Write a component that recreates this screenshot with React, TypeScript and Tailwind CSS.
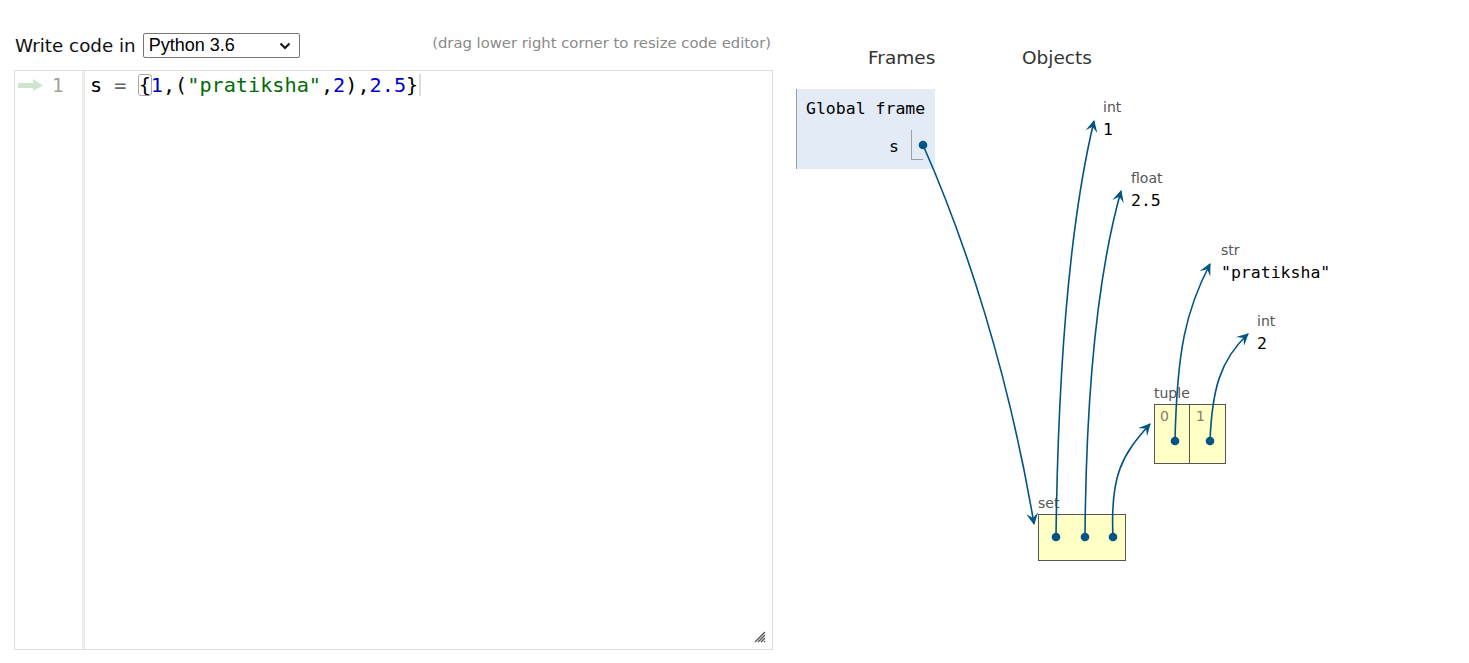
import React from "react";

const sans = { fontFamily: '"DejaVu Sans", Verdana, sans-serif' };
const mono = { fontFamily: '"DejaVu Sans Mono", "Liberation Mono", monospace' };

function Label({ x, y, text }: { x: number; y: number; text: string }) {
  return (
    <div
      className="absolute text-[14px] leading-[16px] text-[#555]"
      style={{ ...sans, left: x, top: y - 8 }}
    >
      {text}
    </div>
  );
}

function Value({ x, y, text }: { x: number; y: number; text: string }) {
  return (
    <div
      className="absolute text-[16.5px] leading-[20px] text-black whitespace-pre"
      style={{ ...mono, left: x, top: y - 9 }}
    >
      {text}
    </div>
  );
}

export default function App() {
  const arrows = [
    "M923,145 C965,240 1008,370 1034,524",
    "M1056,537 C1058,380 1068,230 1094,121",
    "M1085,537 C1086,400 1096,280 1121,191",
    "M1113,537 C1110,475 1122,455 1150,424",
    "M1175,441 C1177,350 1186,310 1210,264",
    "M1210,441 C1212,390 1220,360 1248,334",
  ];
  const dots: [number, number][] = [
    [923, 145],
    [1056, 537],
    [1085, 537],
    [1113, 537],
    [1175, 441],
    [1210, 441],
  ];
  return (
    <div className="relative w-[1469px] h-[663px] bg-white overflow-hidden">
      <div className="flex">
        <div className="pl-[14px] pt-[33px] w-[773px] shrink-0">
          <div className="flex items-center justify-between h-[25px]">
            <div className="flex items-center gap-[7px]">
              <span className="text-[18.3px] text-[#111] ml-[1px]" style={sans}>
                Write code in
              </span>
              <div
                className="flex items-center justify-between w-[157px] h-[25px] border border-[#767676] rounded-[2px] pl-[5px] pr-[8px] text-[18px] text-black"
                style={{ fontFamily: '"Liberation Sans", Arial, sans-serif' }}
              >
                <span>Python 3.6</span>
                <svg width="12" height="8" viewBox="0 0 12 8">
                  <path d="M1.5 1.5 L6 6 L10.5 1.5" fill="none" stroke="#111" strokeWidth="2" />
                </svg>
              </div>
            </div>
            <span className="text-[14.8px] text-[#8a8a8a] mr-[2px] -mt-[4px]" style={sans}>
              (drag lower right corner to resize code editor)
            </span>
          </div>
          <div className="relative mt-[12px] h-[580px] border border-[#dddddd] flex">
            <div className="w-[67px] h-full flex items-start pt-[3px]">
              <div className="flex items-center h-[22px]">
                <svg width="26" height="12" viewBox="0 0 26 12" className="ml-[3px]">
                  <rect x="0" y="4" width="17" height="5" fill="#cfe5cf" />
                  <path d="M15 0 L25 6.5 L15 12 Z" fill="#cfe5cf" />
                </svg>
                <span className="ml-[8px] text-[19px] text-[#a0a0a0]" style={mono}>
                  1
                </span>
              </div>
            </div>
            <div className="w-[3px] h-full bg-[#ebebeb]" />
            <div className="pl-[5px] pt-[3px]">
              <div className="flex items-center h-[22px] text-[20.2px] whitespace-pre" style={mono}>
                <span className="text-black">s </span>
                <span className="text-[#666]">=</span>
                <span> </span>
                <span className="border border-[#a8a8a8] rounded-[3px] -mx-[1px] leading-[20px]">{"{"}</span>
                <span className="text-[#0000cd]">1</span>
                <span>,(</span>
                <span className="text-[#036a07]">"pratiksha"</span>
                <span>,</span>
                <span className="text-[#0000cd]">2</span>
                <span>),</span>
                <span className="text-[#0000cd]">2.5</span>
                <span>{"}"}</span>
                <span className="w-[2px] h-[22px] bg-[#dcdcdc] ml-[1px]" />
              </div>
            </div>
            <svg width="12" height="12" viewBox="0 0 12 12" className="absolute right-[6px] bottom-[6px]">
              <path d="M11 1 L1 11 M11 4 L4 11 M11 7 L7 11 M11 10 L10 11" stroke="#555" strokeWidth="1.3" />
            </svg>
          </div>
        </div>
        <div className="flex-1" />
      </div>

      {/* Visualization canvas */}
      <div className="absolute inset-0 pointer-events-none">
        <div className="absolute left-[868px] top-[47px] text-[18.5px] leading-[22px] text-[#333]" style={sans}>
          Frames
        </div>
        <div className="absolute left-[1022px] top-[47px] text-[18.5px] leading-[22px] text-[#333]" style={sans}>
          Objects
        </div>

        <div className="absolute left-[796px] top-[89px] w-[139px] h-[80px] bg-[#e2ebf6] border-l border-[#a0a0a0]">
          <div className="absolute left-[9px] top-[10px] text-[16.5px] leading-[20px] text-black" style={mono}>
            Global frame
          </div>
          <div className="absolute left-[92px] top-[48px] text-[16.5px] leading-[20px] text-black" style={mono}>
            s
          </div>
          <div className="absolute left-[114px] top-[41px] w-[12px] h-[30px] border-l border-b border-[#a0a0a0]" />
        </div>

        <Label x={1103} y={107} text="int" />
        <Value x={1103} y={129} text="1" />
        <Label x={1131} y={178} text="float" />
        <Value x={1131} y={200} text="2.5" />
        <Label x={1221} y={250} text="str" />
        <Value x={1221} y={272} text={'"pratiksha"'} />
        <Label x={1257} y={321} text="int" />
        <Value x={1257} y={343} text="2" />

        <Label x={1154} y={393} text="tuple" />
        <div className="absolute left-[1154px] top-[404px] w-[72px] h-[60px] flex border border-[#555] bg-[#ffffc6]">
          <div className="w-[35px] h-full border-r border-[#555] pl-[5px] pt-[3px] text-[14px] leading-[16px] text-[#8a7a6a]" style={sans}>
            0
          </div>
          <div className="flex-1 h-full pl-[6px] pt-[3px] text-[14px] leading-[16px] text-[#8a7a6a]" style={sans}>
            1
          </div>
        </div>

        <Label x={1038} y={503} text="set" />
        <div className="absolute left-[1038px] top-[514px] w-[88px] h-[47px] border border-[#555] bg-[#ffffc6]" />

        <svg className="absolute inset-0" width="1469" height="663">
          <defs>
            <marker
              id="ah"
              viewBox="0 0 12 12"
              refX="11"
              refY="6"
              markerWidth="12"
              markerHeight="12"
              markerUnits="userSpaceOnUse"
              orient="auto"
            >
              <path d="M0,0 L12,6 L0,12 L5,6 Z" fill="#005583" />
            </marker>
          </defs>
          {arrows.map((d, i) => (
            <path key={i} d={d} fill="none" stroke="#005583" strokeWidth="1.6" markerEnd="url(#ah)" />
          ))}
          {dots.map(([x, y], i) => (
            <circle key={i} cx={x} cy={y} r="4.3" fill="#005583" />
          ))}
        </svg>
      </div>
    </div>
  );
}
